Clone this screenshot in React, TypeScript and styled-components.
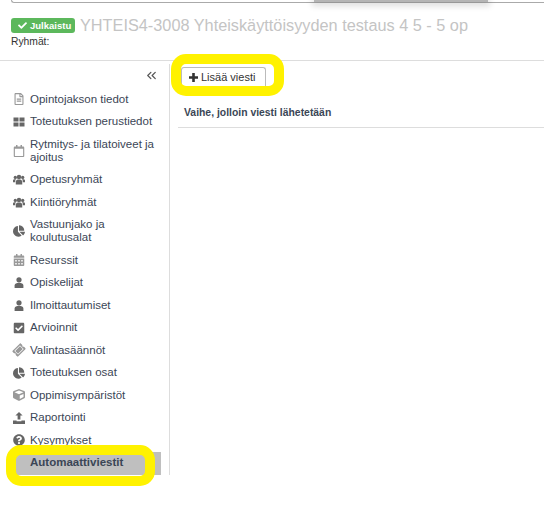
import React from 'react';
import styled, { createGlobalStyle } from 'styled-components';
import {
    FaCalendarAlt,
    FaCheck,
    FaCheckSquare,
    FaChartPie,
    FaCube,
    FaQuestionCircle,
    FaRegCalendar,
    FaRegFileAlt,
    FaTicketAlt,
} from 'react-icons/fa';
import { FiChevronsLeft } from 'react-icons/fi';

const GlobalStyle = createGlobalStyle`
  html, body {
    margin: 0;
    padding: 0;
    background: #fff;
    font-family: "Liberation Sans", Arial, sans-serif;
  }
`;

const UsersIcon = () => (
    <svg width="13" height="11" viewBox="0 0 13 11" fill="currentColor">
        <circle cx="6.5" cy="2.8" r="2.4" />
        <circle cx="2.5" cy="3.2" r="1.8" />
        <circle cx="10.5" cy="3.2" r="1.8" />
        <path d="M3 11V7.8C3 6 4.6 5.4 6.5 5.4S10 6 10 7.8V11z" />
        <path d="M0 8.6V6.6C0 5.6.8 5.2 2.5 5.2c.4 0 .8 0 1 .1C2.600 5.900 2.300 6.800 2.300 8.600z" />
        <path d="M13 8.600V6.600C13 5.600 12.200 5.200 10.500 5.200c-.4 0-.8 0-1 .1.900.6 1.200 1.500 1.200 3.300z" />
    </svg>
);

const UserIcon = () => (
    <svg width="10" height="11" viewBox="0 0 10 11" fill="currentColor">
        <circle cx="5" cy="2.8" r="2.6" />
        <path d="M.6 11V8.400C.6 6.600 2.600 5.800 5 5.800s4.400.8 4.400 2.600V11z" />
    </svg>
);

const BlocksIcon = () => (
    <svg width="12" height="10" viewBox="0 0 12 10" fill="currentColor">
        <rect x="0.500" y="0.500" width="5" height="4" />
        <rect x="6.500" y="0.500" width="5" height="4" />
        <rect x="0.500" y="5.500" width="5" height="4" />
        <rect x="6.500" y="5.500" width="5" height="4" />
    </svg>
);

const UploadIcon = () => (
    <svg width="12" height="12" viewBox="0 0 12 12" fill="currentColor">
        <path d="M6 0 9.600 3.600H7.400V7.600H4.600V3.600H2.400z" />
        <path d="M0 8.400H3.600V9.200H8.400V8.400H12V12H0z" />
    </svg>
);

const PlusIcon = () => (
    <svg width="9" height="9" viewBox="0 0 9 9" fill="currentColor">
        <path d="M3.200 0H5.800V3.200H9V5.800H5.800V9H3.200V5.800H0V3.200H3.200z" />
    </svg>
);

const menuItems: { label: string; icon: React.ReactNode; tilt?: boolean; light?: boolean }[] = [
    { label: 'Opintojakson tiedot', icon: <FaRegFileAlt />, light: true },
    { label: 'Toteutuksen perustiedot', icon: <BlocksIcon /> },
    { label: 'Rytmitys- ja tilatoiveet ja ajoitus', icon: <FaRegCalendar />, light: true },
    { label: 'Opetusryhmät', icon: <UsersIcon /> },
    { label: 'Kiintiöryhmät', icon: <UsersIcon /> },
    { label: 'Vastuunjako ja koulutusalat', icon: <FaChartPie /> },
    { label: 'Resurssit', icon: <FaCalendarAlt />, light: true },
    { label: 'Opiskelijat', icon: <UserIcon /> },
    { label: 'Ilmoittautumiset', icon: <UserIcon /> },
    { label: 'Arvioinnit', icon: <FaCheckSquare /> },
    { label: 'Valintasäännöt', icon: <FaTicketAlt />, tilt: true, light: true },
    { label: 'Toteutuksen osat', icon: <FaChartPie /> },
    { label: 'Oppimisympäristöt', icon: <FaCube />, light: true },
    { label: 'Raportointi', icon: <UploadIcon /> },
    { label: 'Kysymykset', icon: <FaQuestionCircle /> },
];

const App: React.FC = () => {
    return (
        <Page>
            <GlobalStyle />
            <TopStrip>
                <TopShadow />
            </TopStrip>
            <Header>
                <TitleRow>
                    <StatusBadge><FaCheck size={9} /> Julkaistu</StatusBadge>
                    <Title>YHTEIS4-3008 Yhteiskäyttöisyyden testaus 4 5 - 5 op</Title>
                </TitleRow>
                <Groups>Ryhmät:</Groups>
            </Header>
            <Body>
                <Sidebar>
                    <CollapseRow><FiChevronsLeft size={15} /></CollapseRow>
                    <Menu>
                        {menuItems.map((item, index) => (
                            <MenuItem key={index}>
                                <MenuIcon $tilt={item.tilt} $light={item.light}>{item.icon}</MenuIcon>
                                <span>{item.label}</span>
                            </MenuItem>
                        ))}
                    </Menu>
                    <ActiveItem>
                        Automaattiviestit
                        <ActiveRing />
                    </ActiveItem>
                </Sidebar>
                <Content>
                    <Toolbar>
                        <AddButton>
                            <PlusIcon /> Lisää viesti
                            <AddRing />
                        </AddButton>
                    </Toolbar>
                    <TableHead>Vaihe, jolloin viesti lähetetään</TableHead>
                </Content>
            </Body>
        </Page>
    );
};

const Page = styled.div`
  width: 544px;
  height: 528px;
  overflow: hidden;
  background: #fff;
  color: #333;
`;
const TopStrip = styled.div`
  position: relative;
  height: 2px;
  margin-left: 11px;
  border-bottom: 1px solid #aaa;
  border-left: 1px solid #aaa;
  border-bottom-left-radius: 3px;
`;
const TopShadow = styled.div`
  position: absolute;
  top: -1px;
  left: 302px;
  width: 174px;
  height: 3px;
  background: #b5b5b5;
  box-shadow: 0 2px 6px 2px rgba(0, 0, 0, 0.14);
`;
const Header = styled.div`
  height: 58px;
  box-sizing: border-box;
  padding: 15px 0 0 11px;
  border-bottom: 1px solid #ddd;
`;
const TitleRow = styled.div`
  display: flex;
  align-items: center;
  gap: 5px;
`;
const StatusBadge = styled.div`
  display: flex;
  align-items: center;
  gap: 3px;
  box-sizing: border-box;
  height: 15px;
  width: 64px;
  padding-left: 7px;
  border-radius: 3px;
  background: #5cb85c;
  color: #fff;
  font-size: 9.5px;
  font-weight: bold;
`;
const Title = styled.div`
  color: #c4c4c4;
  font-size: 16.3px;
  line-height: 15px;
  white-space: nowrap;
`;
const Groups = styled.div`
  margin-top: 2px;
  font-size: 10.3px;
  line-height: 13px;
  color: #333;
`;
const Body = styled.div`
  display: flex;
  align-items: flex-start;
`;
const Sidebar = styled.div`
  width: 169px;
  height: 411px;
  margin-top: 3px;
  border-right: 1px solid #ddd;
  flex-shrink: 0;
`;
const CollapseRow = styled.div`
  display: flex;
  justify-content: flex-end;
  box-sizing: border-box;
  height: 20px;
  padding: 4px 10px 0 0;
  color: #555;
`;
const Menu = styled.div`
  display: flex;
  flex-direction: column;
  gap: 9.5px;
  margin-top: 8.5px;
  padding-left: 13px;
`;
const MenuItem = styled.div`
  display: flex;
  align-items: center;
  gap: 5px;
  width: 145px;
  font-size: 11.5px;
  line-height: 13px;
  color: #3b4656;
`;
const MenuIcon = styled.div<{ $tilt?: boolean; $light?: boolean }>`
  display: flex;
  justify-content: center;
  width: 12px;
  font-size: 12px;
  color: ${(p) => (p.$light ? '#999' : '#666')};
  flex-shrink: 0;
  transform: ${(p) => (p.$tilt ? 'rotate(-45deg)' : 'none')};
`;
const ActiveItem = styled.div`
  position: relative;
  box-sizing: border-box;
  width: 145px;
  height: 23px;
  margin: 5.5px 0 0 16px;
  padding: 4px 0 0 14px;
  background: #bfbfbf;
  font-size: 11.5px;
  line-height: 13px;
  font-weight: bold;
  color: #3b4656;
`;
const ActiveRing = styled.div`
  position: absolute;
  top: -7px;
  left: -10px;
  width: 149px;
  height: 41px;
  box-sizing: border-box;
  border: 10px solid #fff200;
  border-radius: 15px;
`;
const Content = styled.div`
  flex: 1;
  padding-left: 1px;
`;
const Toolbar = styled.div`
  box-sizing: border-box;
  height: 33px;
  padding: 6px 0 0 10px;
`;
const AddButton = styled.div`
  position: relative;
  display: flex;
  align-items: center;
  gap: 3px;
  box-sizing: border-box;
  width: 85px;
  height: 19px;
  padding-left: 7px;
  border: 1px solid #bbb;
  border-bottom: none;
  border-radius: 3px 3px 0 0;
  font-size: 11px;
  color: #333;
`;
const AddRing = styled.div`
  position: absolute;
  top: -14px;
  left: -11px;
  width: 113px;
  height: 42px;
  box-sizing: border-box;
  border: 10px solid #fff200;
  border-radius: 15px;
`;
const TableHead = styled.div`
  box-sizing: border-box;
  height: 34px;
  margin-left: 7px;
  padding: 13px 0 0 6px;
  border-bottom: 1px solid #ddd;
  font-size: 10.4px;
  line-height: 12px;
  font-weight: bold;
  color: #3b4656;
`;

export default App;
